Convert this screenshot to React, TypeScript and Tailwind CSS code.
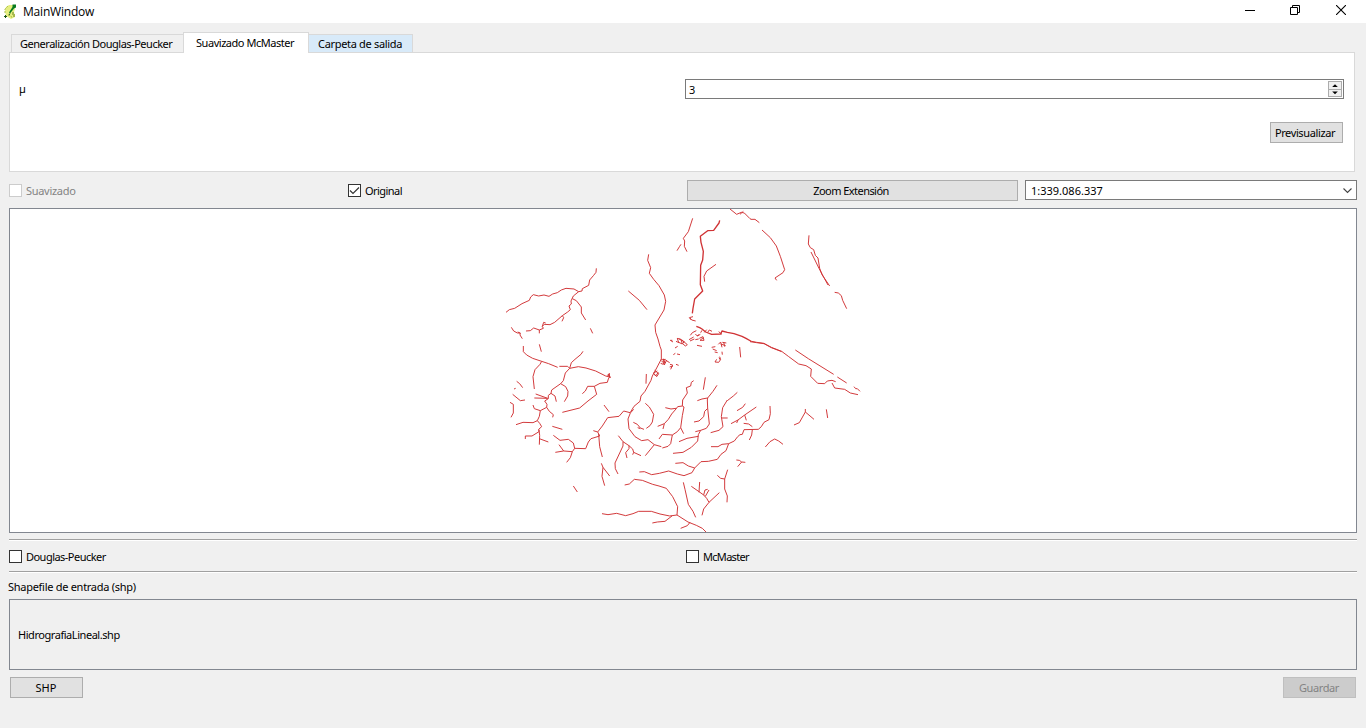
import type { ReactNode } from "react";

type Tile = { x: number; y: number; lines: string[]; heavy?: string[] };

const tiles: Tile[] = [
  {
    x: 500,
    y: 205,
    lines: [
      "18,322 28,314 44,310 66,296 88,286 92,276 100,269 116,273 132,270 147,274 158,267 172,263 184,255 198,250 222,252 236,260 246,258 247,251 266,241 269,225 281,211 288,202 289,190",
      "236,260 220,273 213,288 214,297 207,303 211,314 203,321 187,332 164,352 150,359 133,358 127,364 131,352 137,354",
      "127,364 130,370 118,375 101,369 91,377 78,378",
      "118,375 118,385",
      "187,332 191,338 186,349",
      "217,281 229,287 244,306 244,324 257,345",
      "271,370 278,385",
      "34,367 41,378 52,384 61,384 60,390 67,401",
      "60,384 53,381",
      "118,418 124,440",
    ],
  },
  {
    x: 620,
    y: 205,
    lines: [
      "218,40 205,80 190,100 194,108 193,124 201,140",
      "183,118 179,124 171,137",
      "288,178 260,198 252,214 254,230",
      "25,258 58,286 81,314",
      "86,148 83,166 92,188 88,205 101,223 117,242 133,270 137,289 132,315 105,360 107,382 114,402 120,424 124,435",
      "330,12 350,28 364,22 373,24 390,41",
      "360,28 370,19",
    ],
    heavy: [
      "299,46 297,54 281,76 263,77 241,94 243,112 250,139 248,165 242,181 241,239 248,258 224,282 219,310 217,325",
    ],
  },
  {
    x: 740,
    y: 205,
    lines: [
      "30,41 33,43 45,43 58,53",
      "66,75 91,98 109,123 121,154 134,194 129,203 105,219 110,226",
      "207,91 205,117 211,128 221,134 226,151 234,159 239,190 246,209 269,243",
      "213,141 237,190 252,218 264,240",
      "284,262 295,264 304,272 308,286 320,311",
    ],
  },
  {
    x: 500,
    y: 340,
    lines: [
      "70,18 70,35 80,45 98,55 125,64 146,71 173,82",
      "125,64 120,73 105,89 99,110 103,147",
      "178,79 203,79 209,85 235,80 258,84 287,93 317,108 333,112",
      "323,108 328,100 329,112 324,103",
      "249,34 243,43 225,58 214,68 209,85 196,99 190,122 182,131 155,150 153,160 145,166 145,176 134,183 141,193 140,202 121,212 118,229 112,242 99,248 69,247 48,254",
      "182,131 197,140 204,154 203,168 193,185",
      "153,160 165,168 169,185",
      "107,162 143,175 103,174",
      "187,217 239,204 264,183 290,163 283,139 300,130 322,127 325,117 329,110",
      "283,139 263,139 256,153 247,161",
      "50,124 59,131 68,143",
      "42,147 47,145",
      "38,163 61,182 75,180",
      "30,187 40,193 40,219 33,232",
      "140,202 148,214 160,224 158,232",
      "121,212 103,206 99,195",
      "112,242 119,250 125,260 116,268 117,275 96,288 76,288 76,297",
      "117,269 119,286 118,314",
      "118,296 145,306",
      "157,259 187,268",
      "160,286 180,301 205,298 220,309 224,325 257,326 265,306 273,296 299,288 293,276 307,258 323,233 357,229 371,213 390,218",
      "280,272 293,276",
      "224,325 217,335 191,333 166,337",
      "191,333 177,314",
      "217,335 211,353 200,367",
      "296,282 299,320 307,351",
      "355,287 369,305 369,318 345,369 346,386 354,402",
      "369,305 387,317",
      "304,370 309,382 329,408",
      "309,382 306,409 314,437",
      "220,438 232,456",
    ],
  },
  {
    x: 620,
    y: 300,
    lines: [
      "124,150 124,177 110,204 97,228 93,241 75,274 63,288 60,304 42,319 31,337",
      "210,54 215,60 227,63",
      "214,60 208,53 219,50",
      "157,121 151,121 159,126",
      "168,124 177,128",
      "171,115 183,118 187,132 176,127 172,116",
      "185,119 195,128 202,134 196,138 188,131 193,124",
      "176,116 192,125",
      "165,144 173,139",
      "160,164 166,160",
      "171,162 180,164",
      "122,180 136,178 130,193 122,190",
      "130,176 133,195 140,180",
      "125,185 137,187",
      "138,181 149,188",
      "150,193 158,195 152,208",
      "149,201 159,198",
      "168,193 176,196",
      "104,211 116,221 110,230 100,219 112,213",
      "103,223 107,228 115,217",
      "79,222 78,251",
      "211,106 217,98 229,92",
      "207,119 221,111",
      "210,123 223,117",
      "226,102 232,108 241,103",
      "231,108 237,104",
      "238,115 249,110 252,121 240,121 250,113",
      "226,119 236,117",
      "231,136 246,139",
      "246,91 242,98",
      "253,97 260,89",
      "263,97 268,90 276,94",
      "296,95 306,103",
      "275,142 286,140",
      "278,147 290,152",
      "284,156 293,158",
      "295,133 302,126 306,142",
      "302,132 317,137",
      "311,126 314,140",
      "307,127 319,129",
      "306,155 307,164",
      "290,178 285,186 296,187 301,180 297,173",
      "299,170 302,179",
      "359,141 362,172",
      "256,232 250,269",
      "221,242 214,247 212,258 199,263 202,279 188,300 187,318",
      "291,256 279,274 263,294 246,297 232,302",
      "263,294 262,300",
      "352,277 340,288 322,302",
    ],
    heavy: [
      "229,79 239,83 246,87 257,96 275,103 302,102 306,93 322,97 342,101 366,109 378,115 392,123",
    ],
  },
  {
    x: 740,
    y: 335,
    lines: [
      "30,18 50,22 72,25 94,37 125,49 145,64 176,87 198,92 214,102 212,124 233,145 254,146 262,138 276,136 287,140",
      "276,144 284,159 314,163 331,174 354,179",
      "30,20 50,23 72,26 94,38 125,50",
      "166,45 205,71 281,118",
      "292,126 320,144",
      "342,155 347,161 352,161 360,169",
      "162,270 178,263 196,231 196,222",
      "196,231 222,253",
      "259,223 263,249",
      "76,336 90,320 104,312 116,318 129,328",
      "90,213 91,236 87,254 72,262 64,275 55,283 12,284 7,298 0,299",
      "37,284 35,300 28,315",
    ],
  },
  {
    x: 590,
    y: 400,
    lines: [
      "42,15 57,35",
      "131,28 121,39 114,57 117,86 135,110 155,122 174,119 193,134 214,140",
      "193,134 180,150 166,167",
      "130,67 142,73 151,84 162,88",
      "143,83 151,86",
      "166,10 178,21 191,43 187,66 180,77 169,85",
      "277,18 282,21 277,47 272,83 281,101",
      "272,83 262,95 247,105 242,131 234,139 217,144",
      "247,105 217,103 207,117",
      "277,18 263,20 258,27 245,42 235,58 223,71 203,79",
      "226,23 243,27 258,25",
      "223,71 219,87",
      "352,0 353,25 344,34 341,50 327,63 312,66",
      "353,25 358,72 349,85 332,91 325,104 323,123 304,142 279,157 249,160",
      "267,125 291,115 325,109",
      "332,91 316,95",
      "412,0 398,23 394,50 399,80 387,91 362,98",
      "395,54 413,54",
      "466,11 458,22 441,32",
      "499,21 464,45 444,60 423,71",
      "444,60 440,69",
      "464,45 469,61",
      "461,70 476,72 487,80",
      "450,104 443,110 433,123 416,131 408,152 393,163 382,178 355,184 333,185 314,204 306,218 282,227 262,222 236,213 208,220 185,224 163,215 148,216",
      "416,131 396,133 384,140 363,140",
      "314,204 295,198 279,188 256,190",
      "439,180 448,181 455,186 466,187",
      "455,186 443,200",
      "382,226 392,235 404,237 413,209",
      "404,237 404,267 412,288 411,307",
      "104,255 118,252 133,238 157,241 188,253 207,258 229,265 248,290 263,320 261,345 294,366 319,376 337,385 348,396",
      "261,345 239,348 210,342 184,334 146,334 129,341 107,347 80,340 54,344 36,341",
      "246,348 225,364 202,366 187,369",
      "300,367 292,377 272,385",
      "280,247 285,268 295,313 309,334 317,352",
      "304,259 327,275 341,285 350,295 357,307 388,278",
      "329,246 327,277",
      "341,285 345,270 353,268",
      "346,289 357,270",
      "357,307 341,327 336,346",
      "117,137 128,147 131,157 153,167",
      "131,157 128,164",
      "117,137 117,146 107,158 111,174",
    ],
  },
];

function RiverMap() {
  return (
    <svg
      className="block h-full w-full"
      viewBox="10 209 1346 323"
      fill="none"
      stroke="#d03335"
      strokeLinejoin="round"
    >
      {tiles.map((t) => (
        <g key={`${t.x}-${t.y}`} transform={`translate(${t.x} ${t.y}) scale(0.333333)`}>
          {t.lines.map((p, i) => (
            <polyline key={i} points={p} strokeWidth="2.9" />
          ))}
          {t.heavy?.map((p, i) => (
            <polyline key={i} points={p} strokeWidth="4" />
          ))}
        </g>
      ))}
    </svg>
  );
}

function Check({
  label,
  checked = false,
  disabled = false,
}: {
  label: ReactNode;
  checked?: boolean;
  disabled?: boolean;
}) {
  return (
    <div className={`flex items-center gap-1 ${disabled ? "text-[#838383]" : ""}`}>
      <span
        className={`flex h-[13px] w-[13px] shrink-0 items-center justify-center border bg-white ${
          disabled ? "border-[#cccccc]" : "border-[#333333]"
        }`}
      >
        {checked && (
          <svg width="11" height="11" viewBox="0 0 11 11" fill="none" stroke="#333" strokeWidth="1.2">
            <path d="M1 5.5 4 8.5 10 2.5" />
          </svg>
        )}
      </span>
      {label}
    </div>
  );
}

function AppIcon() {
  return (
    <svg width="13" height="16" viewBox="0 0 13 16">
      <path d="M2 3 5 1h4l2 4-1 3 1 5-4 2-5-3-1-5z" fill="#e6ee80" />
      <path d="M1 9V5l3-3M4 11l3 1 1 2" stroke="#a7bd43" fill="none" strokeDasharray="2 1" />
      <path d="M8 8h2v2h1v3H9v-2H8z" fill="#a5b850" />
      <path d="M8.500.5H12v3l-2 1-4 5-1-1 3.500-5.500z" fill="#087b20" />
      <path d="M0 12.500h3M1.500 11v3M6 9.500 5 11" stroke="#185218" />
    </svg>
  );
}

export default function App() {
  return (
    <div className="flex h-[728px] w-[1366px] flex-col overflow-hidden bg-[#f0f0f0] font-['Noto_Sans','Liberation_Sans',sans-serif] text-[11px] leading-[13px] whitespace-nowrap text-black">
      <header className="flex h-[23px] shrink-0 items-center bg-white pl-1">
        <AppIcon />
        <span className="ml-1.5 pt-px font-['Open_Sans',sans-serif] text-xs tracking-[-0.2px]">MainWindow</span>
        <div className="mr-5 ml-auto flex items-center gap-[35px] pb-[3px]">
          <svg width="10" height="10" viewBox="0 0 10 10" stroke="#000">
            <path d="M0 5.5h10" />
          </svg>
          <svg width="10" height="10" viewBox="0 0 10 10" fill="none" stroke="#000">
            <path d="M.5 2.5h7v7h-7zM2.5 2.5v-2h7v7h-2" />
          </svg>
          <svg className="ml-px" width="10" height="10" viewBox="0 0 10 10" stroke="#000" strokeWidth="1.1">
            <path d="m0 0 10 10M10 0 0 10" />
          </svg>
        </div>
      </header>

      <nav className="mt-[9px] flex h-5 shrink-0 items-end pl-[11px]">
        <div className="flex h-[18px] w-[172px] items-center border border-r-0 border-b-0 border-[#d9d9d9] pl-2">
          <span className="tracking-[-0.48px]">Generalización Douglas-Peucker</span>
        </div>
        <div className="relative -mb-px flex h-[21px] w-[126px] items-center border border-b-0 border-[#d9d9d9] bg-white pb-px pl-3">
          <span className="tracking-[-0.46px]">Suavizado McMaster</span>
        </div>
        <div className="flex h-[18px] w-[104px] items-center border border-b-0 border-l-0 border-[#d9d9d9] bg-[#d8eaf9] pl-[9px]">
          <span className="tracking-[-0.32px]">Carpeta de salida</span>
        </div>
      </nav>

      <section className="ml-[9px] flex h-[120px] w-[1346px] shrink-0 flex-col border border-[#d9d9d9] bg-white pt-[26px]">
        <div className="flex h-5 items-center justify-between pr-[10px] pl-[9px]">
          <span className="pb-0.5">µ</span>
          <div className="flex h-5 w-[659px] items-center justify-between border border-[#7a7a7a] pr-px pl-[3px]">
            <span>3</span>
            <div className="flex h-4 w-[14px] flex-col border border-[#acacac] bg-[#f0f0f0]">
              <svg width="12" height="14" viewBox="0 0 12 14">
                <path d="M6 2.200 8.800 5H3.200z" />
                <path d="M0 7.500h12" stroke="#acacac" />
                <path d="M6 12.200 8.800 9.600H3.200z" />
              </svg>
            </div>
          </div>
        </div>
        <button className="mt-[23px] mr-[11px] h-[21px] w-[73px] self-end border border-[#adadad] bg-[#e1e1e1] pr-[3px] tracking-[-0.38px]">
          Previsualizar
        </button>
      </section>

      <div className="mt-2 ml-[9px] flex h-[21px] shrink-0 items-start">
        <div className="flex h-[21px] w-[339px] items-center tracking-[-0.3px]">
          <Check label="Suavizado" disabled />
        </div>
        <div className="flex h-[21px] w-[339px] items-center tracking-[-0.55px]">
          <Check label="Original" checked />
        </div>
        <button className="h-[21px] w-[331px] border border-[#adadad] bg-[#e1e1e1] pr-[3px] tracking-[-0.55px]">
          Zoom Extensión
        </button>
        <div className="ml-[7px] flex h-5 w-[332px] items-center justify-between border border-[#7a7a7a] bg-white pr-1 pl-[5px]">
          <span>1:339.086.337</span>
          <svg className="mt-0.5" width="9" height="6" viewBox="0 0 9 6" fill="none" stroke="#444" strokeWidth="1.1">
            <path d="m.5.5 4 4 4-4" />
          </svg>
        </div>
      </div>

      <main className="mt-[7px] ml-[9px] h-[325px] w-[1348px] shrink-0 border border-[#828790] bg-white">
        <RiverMap />
      </main>

      <div className="mt-[6px] ml-[9px] flex h-[33px] w-[1348px] shrink-0 items-center border-y border-[#a0a0a0] pt-0.5 shadow-[inset_0_1px_0_#fff,0_1px_0_#fff]">
        <div className="w-[677px] tracking-[-0.53px]">
          <Check label="Douglas-Peucker" />
        </div>
        <div className="tracking-[-0.7px]">
          <Check label="McMaster" />
        </div>
      </div>

      <div className="mt-2 ml-2 h-[13px] shrink-0 tracking-[-0.28px]">Shapefile de entrada (shp)</div>
      <section className="mt-[6px] ml-[9px] flex h-[71px] w-[1348px] shrink-0 items-center border border-[#828790] pl-2 tracking-[-0.45px]">
        HidrografiaLineal.shp
      </section>
      <footer className="mt-[7px] flex shrink-0 justify-between pr-[10px] pl-[10px]">
        <button className="h-[21px] w-[73px] border border-[#adadad] bg-[#e1e1e1] pr-px">SHP</button>
        <button className="h-[21px] w-[73px] border border-[#bfbfbf] bg-[#cccccc] pr-px tracking-[-0.4px] text-[#838383]">
          Guardar
        </button>
      </footer>
    </div>
  );
}
